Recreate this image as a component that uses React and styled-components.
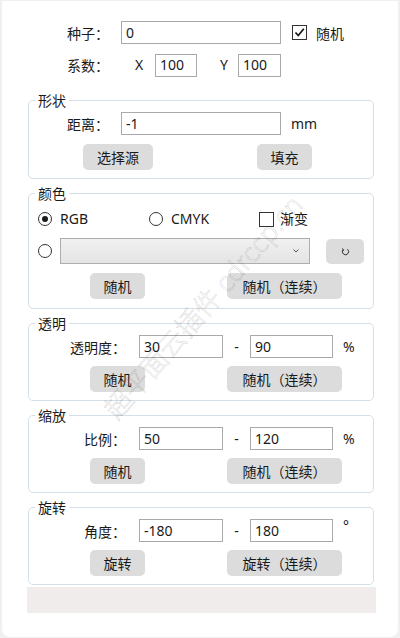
import React from 'react';
import styled, { createGlobalStyle } from 'styled-components';

const GlobalStyle = createGlobalStyle`
  html, body {
    margin: 0;
    padding: 0;
    background: #f0f0f0;
  }
  body {
    font-family: "Noto Sans", "Noto Sans CJK SC", sans-serif;
    font-size: 14px;
    color: #1a1a1a;
  }
  * { box-sizing: border-box; }
`;

const Panel = styled.div`
  position: relative;
  overflow: hidden;
  width: 396px;
  height: 636px;
  margin: 1px 2px 0 2px;
  padding: 20px 0 0 25px;
  background: #fff;
  border-radius: 0 0 8px 8px;
`;

const Row = styled.div`
  display: flex;
  align-items: center;
  height: ${p => p.h || 23}px;
  margin-top: ${p => p.mt || 0}px;
  padding-left: ${p => p.indent || 0}px;
`;

const Label = styled.span`
  flex: none;
  width: ${p => p.w}px;
  text-align: ${p => (p.right ? 'right' : 'left')};
  padding-right: ${p => (p.right ? 13 : 0)}px;
  font-family: "Noto Sans CJK SC", sans-serif;
  line-height: 1;
  white-space: nowrap;
`;

const Field = styled.div`
  flex: none;
  width: ${p => p.w}px;
  height: 23px;
  border: 1px solid #a9a9a9;
  background: #fff;
  padding: 0 4px;
  display: flex;
  align-items: center;
  font-size: 14px;
  line-height: 1;
`;

const Unit = styled.span`
  flex: none;
  margin-left: ${p => p.ml || 0}px;
  width: ${p => p.w || 'auto'};
  text-align: ${p => (p.center ? 'center' : 'left')};
  line-height: 1;
  position: relative;
  top: ${p => (p.raise ? -5 : 0)}px;
`;

const Check = styled.span`
  flex: none;
  width: 15px;
  height: 15px;
  margin-left: ${p => p.ml || 0}px;
  margin-right: ${p => p.mr || 6}px;
  border: 1px solid #333;
  background: #fff;
  display: flex;
  align-items: center;
  justify-content: center;
`;

const Radio = styled.span`
  flex: none;
  width: 14px;
  height: 14px;
  border: 1px solid #333;
  border-radius: 50%;
  display: flex;
  align-items: center;
  justify-content: center;
  margin-right: 8px;

  &::after {
    content: '';
    display: ${p => (p.on ? 'block' : 'none')};
    width: 6px;
    height: 6px;
    border-radius: 50%;
    background: #1a1a1a;
  }
`;

const Option = styled.label`
  flex: none;
  width: ${p => p.w}px;
  display: flex;
  align-items: center;
  line-height: 1;
`;

const Group = styled.fieldset`
  width: 346px;
  margin: ${p => p.mt || 6}px 0 0 1px;
  padding: 4px 0 ${p => p.pb || 8}px 0;
  border: 1px solid #d5dfe7;
  border-radius: 5px;
  min-inline-size: 0;
`;

const Legend = styled.legend`
  margin-left: 6px;
  padding: 0 3px;
  font-family: "Noto Sans CJK SC", sans-serif;
  font-size: 14px;
  line-height: 16px;
  height: 16px;
`;

const Button = styled.button`
  flex: none;
  width: ${p => p.w}px;
  height: ${p => p.h || 26}px;
  margin-left: ${p => p.ml || 0}px;
  border: none;
  border-radius: 5px;
  background: #dcdcdc;
  font-family: "Noto Sans CJK SC", "Noto Sans", sans-serif;
  font-size: 14px;
  color: #1a1a1a;
  padding: 0;
  display: flex;
  align-items: center;
  justify-content: center;
`;

const Select = styled.div`
  flex: none;
  width: 250px;
  height: 26px;
  border: 1px solid #adadad;
  background: linear-gradient(#f0f0f0, #e4e4e4);
  display: flex;
  align-items: center;
  justify-content: flex-end;
  padding-right: 10px;
`;

const Footer = styled.div`
  width: 349px;
  height: 26px;
  margin-top: 2px;
  background: #f0ecec;
`;

const Watermark = styled.div`
  position: absolute;
  left: 200px;
  top: 305px;
  transform: translate(-50%, -50%) rotate(-49deg);
  white-space: nowrap;
  font-family: "Noto Sans CJK SC", "Noto Sans", sans-serif;
  font-size: 27px;
  font-weight: 300;
  color: transparent;
  -webkit-text-stroke: 0.5px rgba(0, 0, 0, 0.2);
  pointer-events: none;
`;

const CheckMark = () => (
  <svg width="11" height="11" viewBox="0 0 11 11">
    <path d="M1.5 5.5 L4.3 8.5 L9.8 1.8" fill="none" stroke="#1a1a1a" strokeWidth="1.8" />
  </svg>
);

const Chevron = () => (
  <svg width="6" height="4" viewBox="0 0 6 4">
    <path d="M0.5 0.5 L3 3 L5.5 0.5" fill="none" stroke="#555" strokeWidth="1" />
  </svg>
);

const Refresh = () => (
  <svg width="9" height="9" viewBox="0 0 9 9">
    <path d="M2.2 2.6 A3.1 3.1 0 1 0 6.4 2.2" fill="none" stroke="#333" strokeWidth="1" />
    <path d="M1 1.6 L2.6 2.7 L1.6 4.2" fill="none" stroke="#333" strokeWidth="1" />
  </svg>
);

const RangeGroup = ({ title, label, from, to, unit, unitRaise, btn, btnMore }) => (
  <Group>
    <Legend>{title}</Legend>
    <Row>
      <Label w={110} right>{label}</Label>
      <Field w={84}>{from}</Field>
      <Unit w="27px" center>-</Unit>
      <Field w={83}>{to}</Field>
      <Unit ml={10} raise={unitRaise}>{unit}</Unit>
    </Row>
    <Row h={26} mt={8} indent={61}>
      <Button w={55}>{btn}</Button>
      <Button w={115} ml={82}>{btnMore}</Button>
    </Row>
  </Group>
);

export default function App() {
  return (
    <>
      <GlobalStyle />
      <Panel>
        <Row indent={40}>
          <Label w={54}>种子：</Label>
          <Field w={160}>0</Field>
          <Check ml={11} mr={9}>
            <CheckMark />
          </Check>
          <span>随机</span>
        </Row>
        <Row h={24} mt={9} indent={40}>
          <Label w={68}>系数：</Label>
          <Unit w="20px">X</Unit>
          <Field w={42}>100</Field>
          <Unit w="18px" ml={23}>Y</Unit>
          <Field w={43}>100</Field>
        </Row>

        <Group mt={15}>
          <Legend>形状</Legend>
          <Row indent={38}>
            <Label w={54}>距离：</Label>
            <Field w={160}>-1</Field>
            <Unit ml={10}>mm</Unit>
          </Row>
          <Row h={26} mt={9} indent={54}>
            <Button w={70}>选择源</Button>
            <Button w={55} ml={104}>填充</Button>
          </Row>
        </Group>

        <Group pb={9}>
          <Legend>颜色</Legend>
          <Row h={16} mt={6} indent={9}>
            <Option w={111}>
              <Radio on />
              RGB
            </Option>
            <Option w={110}>
              <Radio />
              CMYK
            </Option>
            <Option w={70}>
              <Check />
              渐变
            </Option>
          </Row>
          <Row h={26} mt={11} indent={9}>
            <Radio />
            <Select>
              <Chevron />
            </Select>
            <Button w={38} h={25} ml={16}>
              <Refresh />
            </Button>
          </Row>
          <Row h={26} mt={9} indent={61}>
            <Button w={55}>随机</Button>
            <Button w={115} ml={82}>随机（连续）</Button>
          </Row>
        </Group>

        <RangeGroup title="透明" label="透明度：" from="30" to="90" unit="%" btn="随机" btnMore="随机（连续）" />
        <RangeGroup title="缩放" label="比例：" from="50" to="120" unit="%" btn="随机" btnMore="随机（连续）" />
        <RangeGroup title="旋转" label="角度：" from="-180" to="180" unit="°" unitRaise btn="旋转" btnMore="旋转（连续）" />

        <Footer />

        <Watermark>超平面云插件 cdrccp.cn</Watermark>
      </Panel>
    </>
  );
}
